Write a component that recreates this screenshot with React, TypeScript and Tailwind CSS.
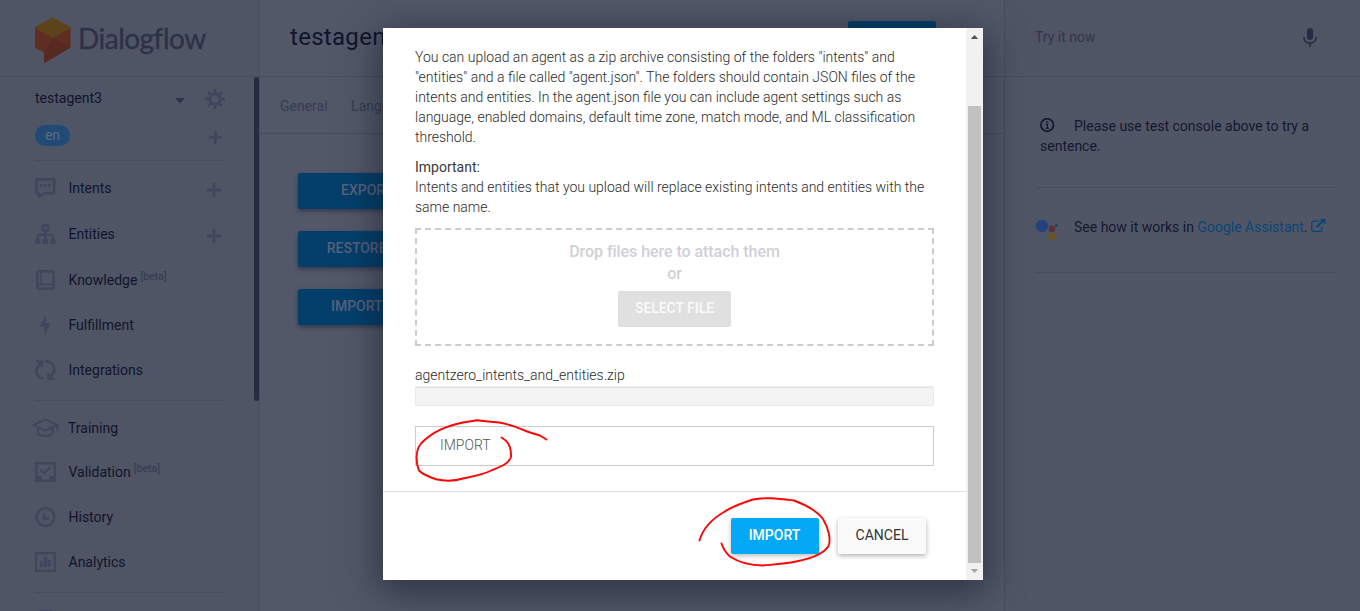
import React from "react";

const INK = "#40465c";

function Icon({ children, w = 21, h = 20 }: { children: React.ReactNode; w?: number; h?: number }) {
  return (
    <svg width={w} height={h} viewBox={`0 0 ${w} ${h}`} fill="none" stroke={INK} className="shrink-0">
      {children}
    </svg>
  );
}

const IntentsIcon = () => (
  <Icon>
    <path d="M1.25 1.25H19.25V15.25H9.5L4.5 18.75V15.25H1.25Z" strokeWidth="2.4" strokeLinejoin="round" />
    <path d="M5 6H7.5V9H5ZM8.8 6H11.6V9H8.8ZM12.8 6H15.5V9H12.8Z" fill={INK} stroke="none" />
  </Icon>
);
const EntitiesIcon = () => (
  <Icon>
    <rect x="7.6" y="1.2" width="5.4" height="5.4" rx="1.2" strokeWidth="2.6" />
    <path d="M10.4 7V15M2.8 16V12.6Q2.8 10.8 4.6 10.8H16.2Q18 10.8 18 12.6V16" strokeWidth="2.2" />
    <path d="M.2 15.2H5.4V20H.2ZM7.8 15.2H13V20H7.8ZM15.4 15.2H20.6V20H15.4Z" fill={INK} stroke="none" />
  </Icon>
);
const KnowledgeIcon = () => (
  <Icon>
    <rect x="2.2" y="1.2" width="16.4" height="17.6" rx="2" strokeWidth="2.4" />
    <path d="M6.2 1V14M2 14.4H18.6" strokeWidth="1.8" />
  </Icon>
);
const FulfillmentIcon = () => (
  <Icon>
    <path d="M10.4 0L5 11.4H9.2L10 20L15.6 8.2H11Z" fill={INK} stroke="none" />
  </Icon>
);
const IntegrationsIcon = () => (
  <Icon>
    <path d="M5 4.2C-1 9 1.2 18.2 8.4 18.6M15.8 15.8C22 11 19.5 1.6 10.4 1.4" strokeWidth="2.6" />
    <path d="M0 .2H8V8.2ZM12.4 12.2V20H20.4Z" fill={INK} stroke="none" />
  </Icon>
);
const TrainingIcon = () => (
  <Icon w={27}>
    <path d="M1.4 7.2L13.4 1.4L25.4 7.2L13.4 12.4ZM25.4 7V13M6 9.6V15.8Q13.4 20.2 20.6 15.8V9.6" strokeWidth="2" strokeLinejoin="round" />
  </Icon>
);
const ValidationIcon = () => (
  <Icon>
    <path d="M0 0H21V20H0ZM2.4 2.4V14H6.8V17.6H14.2V14H18.6V2.4Z" fill={INK} stroke="none" fillRule="evenodd" />
    <path d="M5.6 8L9 11.4L15.4 5.2" strokeWidth="2.2" />
  </Icon>
);
const HistoryIcon = () => (
  <Icon>
    <circle cx="10.4" cy="10" r="8.9" strokeWidth="2.4" />
    <path d="M9 6.4V11.4H14" strokeWidth="2.6" />
  </Icon>
);
const AnalyticsIcon = () => (
  <Icon>
    <path d="M1.1 1.1H19.9V18.9H1.1Z" strokeWidth="2.2" />
    <path d="M5 9H8V15H5ZM9 5H12V15H9ZM12.8 8H15.8V15H12.8Z" fill={INK} stroke="none" />
  </Icon>
);

const Plus = ({ size = 14 }: { size?: number }) => (
  <svg width={size} height={size} viewBox="0 0 14 14" stroke={INK} strokeWidth="2.8">
    <path d="M7 0V14M0 7H14" />
  </svg>
);

function NavRow({ icon, label, beta, plus, className }: { icon: React.ReactNode; label: string; beta?: boolean; plus?: boolean; className: string }) {
  return (
    <div className={`flex items-center ${className}`}>
      <div className="flex w-[33.5px] shrink-0">{icon}</div>
      <span className="text-[14px] leading-5 text-[#10142c]">{label}</span>
      {beta && <span className="-mt-[7px] ml-[3px] text-[10.5px] leading-4 text-[#343a50]">[beta]</span>}
      {plus && (
        <span className="mt-[4px] mr-[3px] ml-auto">
          <Plus />
        </span>
      )}
    </div>
  );
}

function Sidebar() {
  return (
    <aside className="flex w-[260px] shrink-0 flex-col border-r border-[#494e5f] bg-[#4f5565]">
      <div className="flex h-[77px] shrink-0 items-start border-b border-[#484d5e] pt-[17px] pl-[35px]">
        <svg width="36" height="46" viewBox="0 0 36 46">
          <path d="M0 10.5L17.7 2L35.6 10.5V29.3Q35.6 30.5 34.6 31.2L10.5 45.3Q9 46 9 44.7V35.6L1 31.2Q0 30.5 0 29.3Z" fill="#5f2e20" />
          <path d="M17.7 20.5L35.4 30.4L10.5 45.3Q9 46 9 44.7V35.6Z" fill="#562a23" />
          <path d="M1 9.5L16.5 .9Q17.7 .3 18.9 .9L34.8 9.8Q35.8 10.7 34.8 11.4L17.7 21L.8 11.4Q-.2 10.5 1 9.5Z" fill="#5c431b" />
        </svg>
        <span className="mt-[4px] ml-[7px] font-[Lato,sans-serif] text-[28px] leading-[34px] tracking-[-0.5px] text-[#2d3148] [-webkit-text-stroke:0.3px_#2d3148]">Dialogflow</span>
      </div>
      <div className="flex min-h-0 flex-1">
        <div className="flex w-[224px] shrink-0 flex-col pl-[35px]">
          <div className="flex h-[42px] shrink-0 items-center">
            <span className="text-[14px] text-[#10142c]">testagent3</span>
            <svg className="mt-[5px] ml-auto" width="10" height="6" viewBox="0 0 10 6">
              <path d="M0 0H10L5 5.5Z" fill="#2d334b" />
            </svg>
            <svg className="mt-[2px] -mr-px ml-[20px]" width="20" height="20" viewBox="0 0 20 20" fill="none" stroke={INK}>
              <circle cx="10" cy="10" r="5.2" strokeWidth="2.8" />
              <path d="M10 0V4M10 16V20M0 10H4M16 10H20M3 3L6 6M14 14L17 17M3 17L6 14M14 6L17 3" strokeWidth="2.8" />
            </svg>
          </div>
          <div className="flex h-[41px] shrink-0 items-start pt-[6px]">
            <span className="h-[21px] w-[35px] rounded-full bg-[#224a76] text-center text-[14px] leading-[20px] text-[#5c6b80]">en</span>
            <span className="mt-[6px] mr-[2.5px] ml-auto">
              <Plus size={13} />
            </span>
          </div>
          <div className="mb-[4px] h-px shrink-0 bg-[#484e5e]" />
          <NavRow icon={<IntentsIcon />} label="Intents" plus className="h-[46px] shrink-0" />
          <NavRow icon={<EntitiesIcon />} label="Entities" plus className="h-[46px] shrink-0" />
          <NavRow icon={<KnowledgeIcon />} label="Knowledge" beta className="h-[46px] shrink-0" />
          <NavRow icon={<FulfillmentIcon />} label="Fulfillment" className="h-[44px] shrink-0" />
          <NavRow icon={<IntegrationsIcon />} label="Integrations" className="h-[46px] shrink-0" />
          <div className="mt-[7px] mb-[5px] h-px shrink-0 bg-[#484e5e]" />
          <NavRow icon={<span className="-ml-[3px] flex"><TrainingIcon /></span>} label="Training" className="-ml-[0.5px] h-[44px] shrink-0" />
          <NavRow icon={<ValidationIcon />} label="Validation" beta className="h-[44px] shrink-0" />
          <NavRow icon={<HistoryIcon />} label="History" className="h-[46px] shrink-0" />
          <NavRow icon={<AnalyticsIcon />} label="Analytics" className="h-[44px] shrink-0" />
          <div className="mt-[8px] h-px shrink-0 bg-[#484e5e]" />
          <div className="mt-[17px] ml-[3px] h-[6px] w-[16px] shrink-0 rounded-t bg-[#40465c]" />
        </div>
        <div className="ml-[30px] h-[324px] w-[5px] rounded-sm bg-[#282c43]" />
      </div>
    </aside>
  );
}

function Main() {
  const button = "flex h-[36px] w-[184px] items-center justify-center rounded-[2px] bg-[#043f6b] pb-[2px] text-[14px] font-medium text-[#59617a] shadow-[0_2px_4px_rgba(20,24,45,0.5)]";
  return (
    <main className="flex w-[745px] shrink-0 flex-col border-r border-[#484d5e] bg-[#525868]">
      <div className="flex h-[77px] shrink-0 items-start justify-between border-b border-[#484d5e] pr-[68px] pl-[30px]">
        <h1 className="mt-[21px] text-[24px] leading-[32px] tracking-[0.3px] text-[#10142c]">testagent3</h1>
        <div className="mt-[21px] h-[36px] w-[88px] rounded-[2px] bg-[#043f6b] text-center text-[14px] leading-9 font-medium text-[#59617a]">SAVE</div>
      </div>
      <div className="flex h-[57px] shrink-0 items-center gap-[23.5px] border-b border-[#484d5e] pt-[2px] pl-[20px] text-[14px] text-[#363c52]">
        <span>General</span>
        <span>Languages</span>
      </div>
      <div className="flex flex-col gap-[22px] pt-[39px] pl-[38px]">
        <div className={button}>EXPORT AS ZIP</div>
        <div className={button}>RESTORE FROM ZIP</div>
        <div className={button}>IMPORT FROM ZIP</div>
      </div>
    </main>
  );
}

function Console() {
  return (
    <section className="flex min-w-0 flex-1 flex-col bg-[#505666]">
      <div className="flex h-[77px] shrink-0 items-center justify-between border-b border-[#484d5e] bg-[#4f5565] pr-[43px] pb-[2px] pl-[30px]">
        <span className="text-[14px] text-[#31364c]">Try it now</span>
        <svg width="14" height="19" viewBox="0 0 14 19" fill="none" stroke="#272b45">
          <rect x="4" y="0" width="6" height="12" rx="3" fill="#272b45" stroke="none" />
          <path d="M.8 9C.8 17.2 13.2 17.2 13.2 9M7 15V19" strokeWidth="1.6" />
        </svg>
      </div>
      <div className="mr-[24px] ml-[30px] flex h-[111px] shrink-0 flex-col border-b border-[#484d5e] pt-[39px] pl-[5px] text-[14px] leading-5 whitespace-nowrap text-[#14182f]">
        <div className="flex">
          <svg className="mt-[2px] mr-[19px]" width="15" height="15" viewBox="0 0 15 15" fill="none" stroke="#14182f">
            <circle cx="7.2" cy="7" r="6.3" strokeWidth="1.7" />
            <path d="M5.8 6.4H7.4V10.2M5.6 10.3H9" strokeWidth="1.3" />
            <path d="M6.4 3.2H8.2V4.8H6.4Z" fill="#14182f" stroke="none" />
          </svg>
          <span>Please use test console above to try a</span>
        </div>
        <span>sentence.</span>
      </div>
      <div className="mr-[24px] ml-[30px] flex h-[85px] shrink-0 items-start border-b border-[#484d5e] pt-[29px] text-[14px] leading-5 whitespace-nowrap text-[#14182f]">
        <svg className="mt-[2px] mr-[16px]" width="23" height="22" viewBox="0 0 23 22">
          <circle cx="7" cy="7" r="6.2" fill="#24427d" />
          <circle cx="17" cy="10" r="3.2" fill="#632c3c" />
          <circle cx="17" cy="17.6" r="3.6" fill="#6a541f" />
          <circle cx="21.4" cy="6.5" r="1.6" fill="#1a4e45" />
        </svg>
        <span>
          See how it works in <span className="text-[#094677]">Google Assistant</span>.
        </span>
        <svg className="mt-[2px] ml-[3px]" width="15" height="14" viewBox="0 0 15 14" fill="none" stroke="#094677">
          <path d="M8 2.2H2.5Q.8 2.2 .8 4V10.8Q.8 12.4 2.5 12.4H9.4Q11 12.4 11 10.8V8" strokeWidth="1.3" />
          <path d="M5.8 8L12 1.8" strokeWidth="2" />
          <path d="M9 0H14.5V5.5Z" fill="#094677" stroke="none" />
        </svg>
      </div>
    </section>
  );
}

function Modal() {
  return (
    <div className="absolute top-[28px] left-[383px] flex h-[552px] w-[600px] bg-white shadow-[0_8px_34px_4px_rgba(12,15,32,0.5)]">
      <div className="flex w-[583px] flex-col">
        <div className="flex h-[464px] shrink-0 flex-col border-b border-[#e0e0e0] px-[32px] pt-[19px] text-[14px] leading-5 font-light whitespace-nowrap text-[#2b2b2b]">
          <p>
            You can upload an agent as a zip archive consisting of the folders "intents" and
            <br />
            "entities" and a file called "agent.json". The folders should contain JSON files of the
            <br />
            intents and entities. In the agent.json file you can include agent settings such as
            <br />
            language, enabled domains, default time zone, match mode, and ML classification
            <br />
            threshold.
          </p>
          <p className="mt-[10px]">
            <span className="font-normal text-[#3a3a3a]">Important:</span>
            <br />
            Intents and entities that you upload will replace existing intents and entities with the
            <br />
            same name.
          </p>
          <div className="mt-[11px] flex h-[118px] w-[519px] shrink-0 flex-col items-center border-2 border-dashed border-[#cccccc] pt-[11px] text-[16px] leading-[22px] font-medium tracking-[-0.05px] text-[#d0d0d6]">
            <span>Drop files here to attach them</span>
            <span>or</span>
            <span className="mt-[6px] flex h-[36px] w-[113px] items-center justify-center rounded-[2px] bg-[#e0e0e0] pb-[2px] text-[14px] text-[#fafafa]">SELECT FILE</span>
          </div>
          <span className="mt-[19px]">agentzero_intents_and_entities.zip</span>
          <div className="mt-px h-[20px] w-[519px] shrink-0 border border-[#ebebeb] bg-[#f4f4f4] shadow-[inset_0_1px_1px_rgba(0,0,0,0.07)]" />
          <div className="mt-[20px] flex h-[40px] w-[519px] shrink-0 items-center border border-[#cccccc] pb-[2px] pl-[24px] text-[#555555]">IMPORT</div>
        </div>
        <div className="flex flex-1 items-start justify-end gap-[19px] pt-[26px] pr-[40px] text-[14px]">
          <button className="h-[36px] w-[88px] rounded-[2px] bg-[#03a9f4] pr-px pb-[2px] leading-[34px] font-medium text-white shadow-[0_2px_5px_rgba(0,0,0,0.26)]">IMPORT</button>
          <button className="h-[36px] w-[88px] rounded-[2px] bg-[#fafafa] pb-[2px] leading-[34px] text-[#333333] shadow-[0_2px_5px_rgba(0,0,0,0.3)]">CANCEL</button>
        </div>
      </div>
      <div className="flex w-[17px] flex-col items-center bg-[#f1f1f1]">
        <svg width="17" height="17" viewBox="0 0 17 17">
          <path d="M4.8 11H12.2L8.5 7Z" fill="#505050" />
        </svg>
        <div className="mt-[61px] h-[457px] w-[13px] bg-[#c1c1c1]" />
        <svg width="17" height="17" viewBox="0 0 17 17">
          <path d="M4.8 6H12.2L8.5 10Z" fill="#a3a3a3" />
        </svg>
      </div>
    </div>
  );
}

function Annotations() {
  return (
    <svg className="pointer-events-none absolute top-0 left-0" width="1360" height="611" viewBox="0 0 1360 611" fill="none" stroke="#fb0505" strokeWidth="1.9" strokeLinecap="round" strokeLinejoin="round">
      <path d="M546.5 439.5L540 435.5L530 432.5C520 429 512 424.5 499 422.5L488 421.5L477 420.3L463 422.5C447 426 433 431 421 443.5C415.5 450 415.5 462 419 470.5C423 475 430 477 436 479.3C446 481.5 455 481 463 478.5C475 476 483 474.5 490 471C499 467 508 465 511 457C511.5 448 508 441 501.5 437.5" />
      <path d="M699.5 540.5C703 528 712 519 724 512C733 506 742 503 753 499.5C765 497 777 498.5 794 500.5C806 505 817 511 823 519C829 529 831 540 828.5 546C823 555 809 559 796 561.5C784 564 773 564.5 763 565.5C749 565.5 739 562.5 730 556.5C726 553 723 548 721.5 543.5" />
    </svg>
  );
}

export default function App() {
  return (
    <div className="relative flex h-[611px] w-[1360px] overflow-hidden font-[Roboto,sans-serif]">
      <Sidebar />
      <Main />
      <Console />
      <Modal />
      <Annotations />
    </div>
  );
}
